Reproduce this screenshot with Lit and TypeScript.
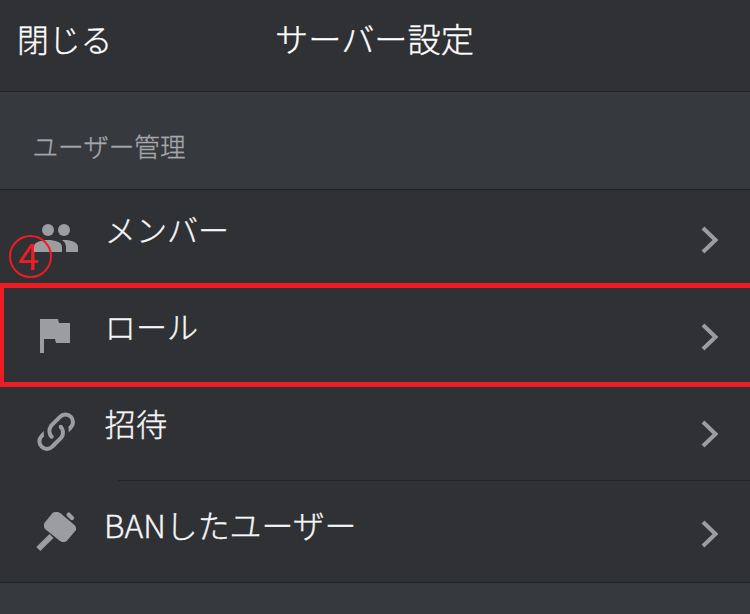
import { LitElement, html, css, svg } from "lit";
import { customElement, property } from "lit/decorators.js";

const halfLink = () => svg`<path d="M22 28A7.500 8 0 0 1 21.200 16.700L30 7.900A7.500 7.500 0 1 1 40.600 18.500L39.500 19.600" fill="none" stroke="currentColor" stroke-width="4"/><circle cx="21.700" cy="27.700" r="2"/><path d="M38.600 18.500V23.500L42 20Z"/>`;

const icons: Record<string, unknown> = {
  members: svg`<circle cx="18" cy="15" r="6"/><circle cx="34" cy="15" r="6"/><path d="M4 37V32C4 27 11 25 18 25S32 27 32 32V37Z"/><path d="M32 25.2C40 24.6 48 27 48 32V37H36V32C36 29 34.6 26.8 32 25.2Z"/>`,
  flag: svg`<path d="M10 7H28L29 11H40V31H26L25 27H14V41H10Z"/>`,
  link: svg`<g>${halfLink()}</g><g transform="rotate(180 26.200 22.700)">${halfLink()}</g>`,
  hammer: svg`<path d="M22.700 3.700Q24 3 25.500 3H28L30.500 4.300L45 16.500L46 18.500V21L37 31.700L35 33H32L30 32L15 20L14 18V14.500Z"/><path d="M38.700 5.700L42 9" stroke="currentColor" stroke-width="4.400" stroke-linecap="round"/><path d="M19.500 25L23.500 29L10.300 42L6.300 38Z"/>`,
};

@customElement("settings-row")
export class SettingsRow extends LitElement {
  @property() label = "";
  @property() icon = "";
  static styles = css`
    :host { display: flex; box-sizing: border-box; height: 97px; padding: 14px 30px 0 30px; }
    :host(.last) { height: 101px; padding-top: 17px; }
    .icon { width: 52px; height: 52px; margin-top: 11px; color: #9c9da1; fill: currentColor; flex: none; }
    .label { margin-left: 22.800px; flex: 1; line-height: 50px; font-size: 31.100px; color: #f6f6f6; white-space: nowrap; }
    :host(.last) .label { margin-left: 22px; font-size: 31.900px; margin-top: 1px; }
    .chevron { width: 20px; height: 30px; margin-top: 21px; fill: none; stroke: #9c9da1; stroke-width: 4; }
  `;
  render() {
    return html`<svg class="icon" viewBox="0 0 52 52">${icons[this.icon]}</svg>
      <span class="label">${this.label}</span>
      <svg class="chevron" viewBox="0 0 20 30"><path d="M3 3L15.500 15L3 27"/></svg>`;
  }
}

@customElement("app-root")
export class AppRoot extends LitElement {
  static styles = css`
    :host { display: flex; flex-direction: column; position: relative; height: 614px; overflow: hidden; background: #36393e; font-family: "Noto Sans CJK JP", sans-serif; font-weight: 300; -webkit-text-stroke: 0.35px currentColor; }
    .header { box-sizing: border-box; height: 92px; padding: 13px 17px 0; background: #303135; border-bottom: 1px solid #202225; display: grid; grid-template-columns: 1fr auto 1fr; color: #fff; line-height: 50px; }
    .close { font-size: 31.800px; }
    .title { font-size: 33.200px; margin-left: -1px; }
    .section { box-sizing: border-box; height: 98px; padding: 34px 32.500px 0; border-bottom: 1px solid #202225; font-size: 25.600px; line-height: 40px; color: #a5a7aa; }
    .list { background: #303135; border-bottom: 1px solid #202225; }
    .divider { height: 1px; margin: -1px 0 0 118px; background: #202225; }
    .highlight { position: absolute; box-sizing: border-box; left: 0; top: 283px; width: 760px; height: 104px; border: solid #ee1c25; border-width: 5px 4px; }
    .step { position: absolute; box-sizing: border-box; left: 9px; top: 235px; width: 43px; height: 43px; border: 2px solid #ee1c25; border-radius: 50%; padding-right: 4px; text-align: center; font-size: 37px; line-height: 35px; font-weight: 400; -webkit-text-stroke: 0; color: #ee1c25; }
  `;
  render() {
    return html`
      <div class="header"><span class="close">閉じる</span><span class="title">サーバー設定</span></div>
      <div class="section">ユーザー管理</div>
      <div class="list">
        <settings-row icon="members" label="メンバー"></settings-row>
        <settings-row icon="flag" label="ロール"></settings-row>
        <settings-row icon="link" label="招待"></settings-row>
        <div class="divider"></div>
        <settings-row class="last" icon="hammer" label="BANしたユーザー"></settings-row>
      </div>
      <div class="highlight"></div>
      <span class="step">4</span>`;
  }
}
